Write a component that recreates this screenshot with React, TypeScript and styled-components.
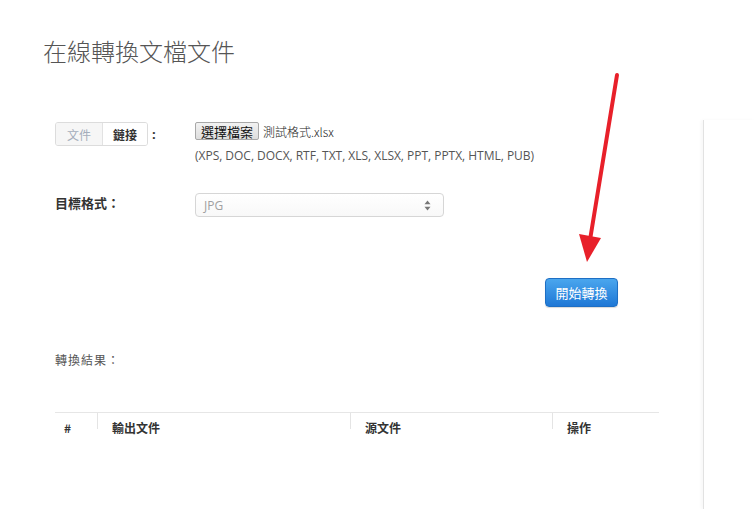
import React from "react";
import styled, { createGlobalStyle } from "styled-components";

const Global = createGlobalStyle`
  html, body { margin: 0; padding: 0; background: #fff; }
  body { font-family: "Open Sans", "Noto Sans CJK TC", sans-serif; color: #333; }
`;

const Page = styled.div`
  position: relative;
  width: 755px;
  height: 509px;
  overflow: hidden;
`;

const Title = styled.h1`
  margin: 0;
  padding: 38px 0 0 43px;
  height: 82px;
  box-sizing: border-box;
  font-family: "Noto Sans CJK TC", sans-serif;
  font-size: 24px;
  line-height: 26px;
  font-weight: 300;
  color: #555;
`;

const Body = styled.div`
  display: flex;
  height: 427px;
`;

const Main = styled.div`
  width: 703px;
  padding: 40px 0 0 55px;
  box-sizing: border-box;
`;

const Sidebar = styled.div`
  flex: 1;
  margin-top: 38px;
  border-left: 1px solid #e2e2e2;
  box-shadow: -2px 0 3px rgba(0, 0, 0, 0.03);
`;

const FormRow = styled.div<{ $top?: number }>`
  display: grid;
  grid-template-columns: 140px 1fr;
  align-items: start;
  margin-top: ${(p) => p.$top ?? 0}px;
`;

const LabelCell = styled.div`
  display: flex;
  align-items: center;
  gap: 4px;
`;

const TabGroup = styled.div`
  display: flex;
  height: 24px;
  border: 1px solid #dcdcdc;
  border-radius: 3px;
  box-sizing: border-box;
  overflow: hidden;
`;

const Tab = styled.div<{ $active?: boolean; $w: number }>`
  width: ${(p) => p.$w}px;
  display: flex;
  align-items: center;
  justify-content: center;
  font-family: "Noto Sans CJK TC", sans-serif;
  font-size: 12px;
  font-weight: ${(p) => (p.$active ? 400 : 700)};
  color: ${(p) => (p.$active ? "#a4adbb" : "#333")};
  background: ${(p) => (p.$active ? "#f6f6f6" : "#fff")};
  & + & { border-left: 1px solid #e2e2e2; }
`;

const Colon = styled.span`
  font-size: 13px;
  font-weight: 700;
  color: #333;
`;

const FileLine = styled.div`
  display: flex;
  align-items: center;
  gap: 4px;
  height: 18px;
`;

const FileButton = styled.div`
  height: 18px;
  padding: 0 5px;
  box-sizing: border-box;
  display: flex;
  align-items: center;
  border: 1px solid #a8a8a8;
  border-radius: 2px;
  background: linear-gradient(#f2f2f2, #dedede);
  font-family: "Noto Sans CJK TC", sans-serif;
  font-size: 13px;
  color: #111;
`;

const FileName = styled.span`
  font-family: "Noto Sans CJK TC", sans-serif;
  font-size: 12px;
  font-weight: 300;
  color: #222;
`;

const Hint = styled.div`
  margin-top: 8px;
  font-size: 12px;
  color: #555;
  line-height: 16px;
  letter-spacing: -0.02px;
`;

const FieldLabel = styled.div`
  padding-top: 0;
  font-family: "Noto Sans CJK TC", sans-serif;
  font-size: 13px;
  font-weight: 700;
  color: #333;
`;

const Select = styled.div`
  width: 249px;
  height: 24px;
  box-sizing: border-box;
  border: 1px solid #d6d6d6;
  border-radius: 4px;
  background: linear-gradient(#fff, #f8f8f8);
  display: flex;
  align-items: center;
  justify-content: space-between;
  padding: 0 12px 0 8px;
  font-size: 12px;
  color: #a0a0a0;
`;

const ActionRow = styled.div`
  width: 563px;
  display: flex;
  justify-content: flex-end;
  margin-top: 61px;
`;

const PrimaryButton = styled.button`
  width: 73px;
  height: 29px;
  border: 1px solid #1e6fc4;
  border-radius: 4px;
  background: linear-gradient(#4aa6ee, #1f78d6);
  color: #fff;
  font-family: "Noto Sans CJK TC", sans-serif;
  font-size: 13px;
  padding: 0;
  box-shadow: 0 1px 1px rgba(0, 0, 0, 0.15);
`;

const ResultLabel = styled.div`
  margin-top: 44px;
  font-family: "Noto Sans CJK TC", sans-serif;
  font-size: 12px;
  color: #555;
  letter-spacing: 1px;
`;

const Table = styled.div`
  margin-top: 44px;
  width: 604px;
  border-top: 1px solid #e6e6e6;
  display: grid;
  grid-template-columns: 42px 253px 202px 107px;
`;

const HeadCell = styled.div<{ $sep?: boolean }>`
  position: relative;
  height: 28px;
  display: flex;
  align-items: center;
  padding-left: ${(p) => (p.$sep ? 15 : 9)}px;
  font-family: "Noto Sans CJK TC", sans-serif;
  font-size: 12px;
  font-weight: 700;
  color: #333;
  &::before {
    content: "";
    display: ${(p) => (p.$sep ? "block" : "none")};
    position: absolute;
    left: 0;
    top: 0;
    width: 1px;
    height: 16px;
    background: #e4e4e4;
  }
`;

const Overlay = styled.svg`
  position: absolute;
  left: 0;
  top: 0;
  pointer-events: none;
`;

export default function App() {
  return (
    <Page>
      <Global />
      <Title>在線轉換文檔文件</Title>
      <Body>
        <Main>
          <FormRow>
            <LabelCell>
              <TabGroup>
                <Tab $active $w={46}>文件</Tab>
                <Tab $w={44}>鏈接</Tab>
              </TabGroup>
              <Colon>:</Colon>
            </LabelCell>
            <div>
              <FileLine>
                <FileButton>選擇檔案</FileButton>
                <FileName>測試格式.xlsx</FileName>
              </FileLine>
              <Hint>(XPS, DOC, DOCX, RTF, TXT, XLS, XLSX, PPT, PPTX, HTML, PUB)</Hint>
            </div>
          </FormRow>
          <FormRow $top={29}>
            <FieldLabel>目標格式：</FieldLabel>
            <Select>
              <span>JPG</span>
              <svg width="7" height="11" viewBox="0 0 7 11">
                <path d="M3.5 0.5 L6.5 4.2 H0.5 Z" fill="#777" />
                <path d="M3.5 10.5 L6.5 6.8 H0.5 Z" fill="#777" />
              </svg>
            </Select>
          </FormRow>
          <ActionRow>
            <PrimaryButton>開始轉換</PrimaryButton>
          </ActionRow>
          <ResultLabel>轉換結果：</ResultLabel>
          <Table>
            <HeadCell>#</HeadCell>
            <HeadCell $sep>輸出文件</HeadCell>
            <HeadCell $sep>源文件</HeadCell>
            <HeadCell $sep>操作</HeadCell>
          </Table>
        </Main>
        <Sidebar />
      </Body>
      <Overlay width="755" height="509" viewBox="0 0 755 509">
        <line x1="617" y1="75" x2="590" y2="240" stroke="#e8202a" strokeWidth="4" strokeLinecap="round" />
        <polygon points="579,234 601,238 587,262" fill="#e8202a" />
      </Overlay>
    </Page>
  );
}
